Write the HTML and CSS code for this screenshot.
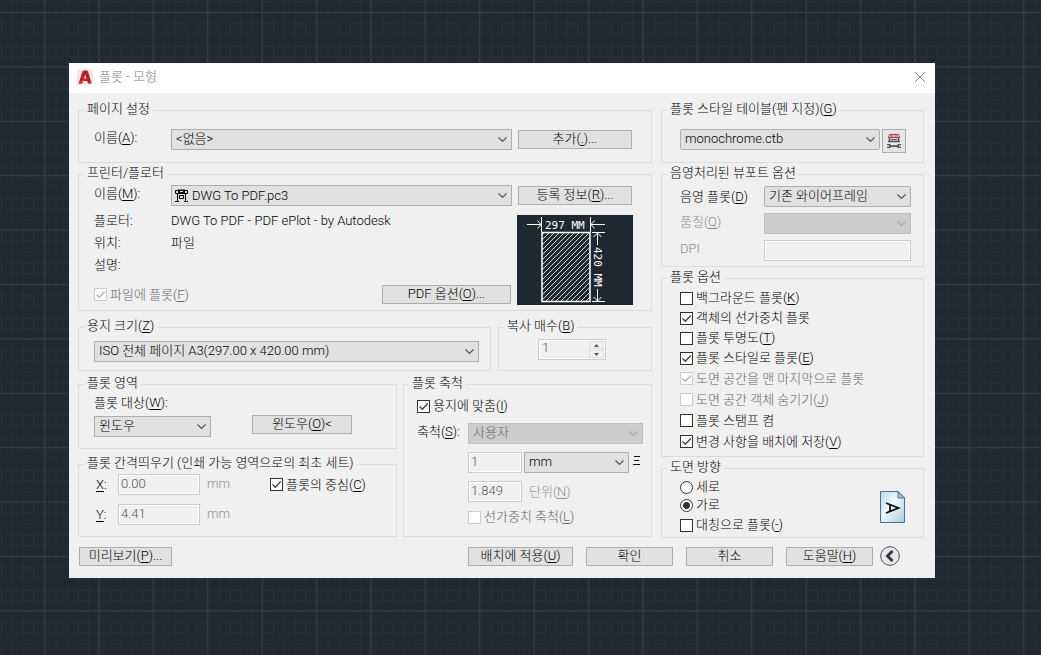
FILE: index.html
```html
<!DOCTYPE html>
<html lang="ko">
<head>
<meta charset="utf-8">
<title>플롯 - 모형</title>
<link rel="stylesheet" href="styles.css">
</head>
<body>
<svg class="canvas-grid" width="100%" height="100%" aria-hidden="true">
  <defs>
    <pattern id="minor" x="44.5" y="12.5" width="10.88" height="10.88" patternUnits="userSpaceOnUse">
      <path d="M.5 0V10.88M0 .5H10.88" stroke="#252e39" stroke-width="1" fill="none"/>
    </pattern>
    <pattern id="major" x="44" y="12" width="54.4" height="54.4" patternUnits="userSpaceOnUse">
      <path d="M.5 0V54.4M0 .5H54.4" stroke="#333d48" stroke-width="1" fill="none"/>
    </pattern>
  </defs>
  <rect width="100%" height="100%" fill="#212832"/>
  <rect width="100%" height="100%" fill="url(#minor)"/>
  <rect width="100%" height="100%" fill="url(#major)"/>
</svg>

<form class="dialog" role="dialog" aria-labelledby="dialog-title">
  <header class="titlebar">
    <svg class="app-icon" width="16" height="16" viewBox="0 0 16 16" aria-hidden="true">
      <rect width="16" height="16" fill="#fbe4e2"/>
      <path d="M1.500 14.500 5.500 2.500Q6 1.500 7 1.500H9.500Q10.500 1.500 11 2.500L14.500 14.500H11L10.200 12H6L5 14.500z" fill="#b3222b"/>
      <path d="M6.800 9.600 8.300 5.500 9.500 9.600z" fill="#f6d0ce"/>
      <path d="M1.500 14.500 4.500 11.500 9.800 9.200 6 12.200 5 14.500z" fill="#cf3a40"/>
    </svg>
    <h1 class="title" id="dialog-title">플롯 - 모형</h1>
    <button class="close" type="button" aria-label="닫기">
      <svg width="12" height="12" viewBox="0 0 12 12"><path d="M1 1 11 11M11 1 1 11" stroke="#8a8a8a" fill="none"/></svg>
    </button>
  </header>

  <div class="columns">
    <div class="column column-main">
      <fieldset class="group">
        <legend>페이지 설정</legend>
        <div class="page-setup row">
          <label class="name-label" for="page-name">이름(<u>A</u>):</label>
          <select class="grow" id="page-name"><option>&lt;없음&gt;</option></select>
          <button class="btn side-btn" type="button">추가(<u>.</u>)...</button>
        </div>
      </fieldset>

      <fieldset class="group">
        <legend>프린터/플로터</legend>
        <div class="printer">
          <div class="row">
            <label class="name-label" for="printer-name">이름(<u>M</u>):</label>
            <div class="icon-select grow">
              <select class="grow" id="printer-name"><option>DWG To PDF.pc3</option></select>
              <svg class="plotter-icon" width="13" height="13" viewBox="0 0 13 13" aria-hidden="true">
                <path d="M.5 1.500H12.500V4.500H.5zM2.500 4.500V12M10.500 4.500V12M0 12.500H4M9 12.500H13M4.500 6.500H8.500V9.500H4.500z" stroke="#000" fill="none"/>
                <path d="M3 .5H10V4H3z" fill="#111"/><path d="M5 2H8V3H5z" fill="#fff"/>
              </svg>
            </div>
            <button class="btn side-btn" type="button">등록 정보(<u>R</u>)...</button>
          </div>
          <div class="printer-body">
            <div class="grow">
              <dl class="facts">
                <dt>플로터:</dt><dd>DWG To PDF - PDF ePlot - by Autodesk</dd>
                <dt>위치:</dt><dd>파일</dd>
                <dt>설명:</dt><dd></dd>
              </dl>
              <div class="file-row">
                <label class="check disabled"><input type="checkbox" checked disabled><span>파일에 플롯(<u>F</u>)</span></label>
                <button class="btn pdf-btn" type="button">PDF 옵션(<u>O</u>)...</button>
              </div>
            </div>
            <svg class="preview" width="116" height="90" viewBox="0 0 116 90" role="img" aria-label="297 x 420 MM">
              <defs>
                <pattern id="hatch" width="5" height="5" patternUnits="userSpaceOnUse">
                  <path d="M-1 6 6 -1M-1 1 1 -1M4 6 6 4" stroke="#fff" stroke-width=".8" fill="none"/>
                </pattern>
              </defs>
              <rect width="116" height="90" fill="#1f2730"/>
              <rect x="25" y="17.500" width="48" height="69" fill="url(#hatch)" stroke="#fff" stroke-width="1.500"/>
              <path d="M24.500 2V17M73.500 2V17M10 9.500H24M20.500 5.500 24 9.500 20.500 13.500M88 9.500H74M77.500 5.500 74 9.500 77.500 13.500M75 17.500H88M75 86.500H88M80.500 18V30M76.500 22 80.500 18 84.500 22M80.500 74V86M76.500 82 80.500 86 84.500 82" stroke="#fff" fill="none"/>
              <text class="dim" x="28" y="14">297 MM</text>
              <text class="dim" transform="translate(77 32) rotate(90)">420 MM</text>
            </svg>
          </div>
        </div>
      </fieldset>

      <div class="paper-copies">
        <fieldset class="group">
          <legend>용지 크기(<u>Z</u>)</legend>
          <div class="paper row">
            <select class="grow" aria-label="용지 크기"><option>ISO 전체 페이지 A3(297.00 x 420.00 mm)</option></select>
          </div>
        </fieldset>
        <fieldset class="group">
          <legend>복사 매수(<u>B</u>)</legend>
          <div class="copies row">
            <div class="spinner">
              <input type="text" value="1" aria-label="복사 매수" disabled>
              <div class="spin-buttons">
                <button type="button" aria-label="증가" disabled><svg width="5" height="3" viewBox="0 0 5 3"><path d="M0 3 2.500 0 5 3z" fill="#555"/></svg></button>
                <button type="button" aria-label="감소" disabled><svg width="5" height="3" viewBox="0 0 5 3"><path d="M0 0 2.500 3 5 0z" fill="#555"/></svg></button>
              </div>
            </div>
          </div>
        </fieldset>
      </div>

      <div class="area-scale">
        <div class="area-column">
          <fieldset class="group">
            <legend>플롯 영역</legend>
            <div class="area">
              <label for="plot-what">플롯 대상(<u>W</u>):</label>
              <div class="area-row">
                <select id="plot-what"><option>윈도우</option></select>
                <button class="btn window-btn" type="button">윈도우(<u>O</u>)&lt;</button>
              </div>
            </div>
          </fieldset>
          <fieldset class="group">
            <legend>플롯 간격띄우기 (인쇄 가능 영역으로의 최초 세트)</legend>
            <div class="offset">
              <label for="off-x"><u>X</u>:</label>
              <input class="field" id="off-x" type="text" value="0.00" disabled>
              <span class="muted unit">mm</span>
              <label class="check"><input type="checkbox" checked><span>플롯의 중심(<u>C</u>)</span></label>
              <label for="off-y"><u>Y</u>:</label>
              <input class="field" id="off-y" type="text" value="4.41" disabled>
              <span class="muted unit">mm</span>
            </div>
          </fieldset>
        </div>
        <fieldset class="group">
          <legend>플롯 축척</legend>
          <div class="scale">
            <label class="check"><input type="checkbox" checked><span>용지에 맞춤(<u>I</u>)</span></label>
            <div class="scale-row">
              <label class="scale-label" for="scale-sel">축척(<u>S</u>):</label>
              <select class="grow" id="scale-sel" disabled><option>사용자</option></select>
            </div>
            <div class="scale-row indent pair">
              <input class="field short" type="text" value="1" aria-label="용지 단위" disabled>
              <select class="unit-select" aria-label="단위"><option>mm</option></select>
              <svg class="equals" width="7" height="10" viewBox="0 0 7 10" aria-hidden="true"><path d="M1 .5H7M1 4.500H6M0 8.500H7" stroke="#111" fill="none"/></svg>
            </div>
            <div class="scale-row indent">
              <input class="field short" id="units" type="text" value="1.849" disabled>
              <label class="muted units-label" for="units">단위(<u>N</u>)</label>
            </div>
            <label class="check disabled indent"><input type="checkbox" disabled><span>선가중치 축척(<u>L</u>)</span></label>
          </div>
        </fieldset>
      </div>
    </div>

    <div class="column column-side">
      <fieldset class="group">
        <legend>플롯 스타일 테이블(펜 지정)(<u>G</u>)</legend>
        <div class="style-table">
          <select class="grow rounded" aria-label="플롯 스타일 테이블"><option>monochrome.ctb</option></select>
          <button class="edit-btn" type="button" aria-label="편집">
            <svg width="14" height="16" viewBox="0 0 14 16">
              <path d="M2.500 1.500H11.500L12.500 4.500H1.500z" fill="#e8c9cb" stroke="#a33a44"/>
              <path d="M5 2V5M9 2V5" stroke="#a33a44"/>
              <path d="M2.500 5V8M11.500 5V8M1 8.500H13" stroke="#4a4f5e" stroke-width="1.500" fill="none"/>
              <path d="M4 6.500H10" stroke="#4a4f5e"/>
              <path d="M0 11H3L4 12.200H10L11 11H14V12.200H12V13.800H14V15H11L10 14H4L3 15H0V13.800H2V12.200H0z" fill="#4d5564"/>
            </svg>
          </button>
        </div>
      </fieldset>

      <fieldset class="group">
        <legend>음영처리된 뷰포트 옵션</legend>
        <div class="viewport">
          <label for="shade">음영 플롯(<u>D</u>)</label>
          <select class="rounded" id="shade"><option>기존 와이어프레임</option></select>
          <label class="muted" for="quality">품질(<u>Q</u>)</label>
          <select id="quality" disabled><option></option></select>
          <label class="muted" for="dpi">DPI</label>
          <input class="field" id="dpi" type="text" disabled>
        </div>
      </fieldset>

      <fieldset class="group">
        <legend>플롯 옵션</legend>
        <div class="options">
          <label class="check"><input type="checkbox"><span>백그라운드 플롯(<u>K</u>)</span></label>
          <label class="check"><input type="checkbox" checked><span>객체의 선가중치 플롯</span></label>
          <label class="check"><input type="checkbox"><span>플롯 투명도(<u>T</u>)</span></label>
          <label class="check"><input type="checkbox" checked><span>플롯 스타일로 플롯(<u>E</u>)</span></label>
          <label class="check disabled"><input type="checkbox" checked disabled><span>도면 공간을 맨 마지막으로 플롯</span></label>
          <label class="check disabled"><input type="checkbox" disabled><span>도면 공간 객체 숨기기(<u>J</u>)</span></label>
          <label class="check"><input type="checkbox"><span>플롯 스탬프 켬</span></label>
          <label class="check"><input type="checkbox" checked><span>변경 사항을 배치에 저장(<u>V</u>)</span></label>
        </div>
      </fieldset>

      <fieldset class="group">
        <legend>도면 방향</legend>
        <div class="orientation">
          <div class="orient-list">
            <label class="check"><input type="radio" name="orient"><span>세로</span></label>
            <label class="check"><input type="radio" name="orient" checked><span>가로</span></label>
            <label class="check"><input type="checkbox"><span>대칭으로 플롯(<u>-</u>)</span></label>
          </div>
          <svg width="25" height="32" viewBox="0 0 25 32" aria-hidden="true">
            <defs><linearGradient id="sheet" x1="0" y1="0" x2="1" y2="1"><stop offset="0" stop-color="#b9dbe4"/><stop offset=".45" stop-color="#eef8fa"/><stop offset="1" stop-color="#a9ced9"/></linearGradient></defs>
            <path d="M.5 .5H18L24.500 7V31.500H.5z" fill="url(#sheet)" stroke="#44729a"/>
            <path d="M18 .5V7H24.500z" fill="#b4bfe8" stroke="#44729a"/>
            <path d="M6 12 18.500 17 6 22M10 13.500V20.500" fill="none" stroke="#111" stroke-width="1.800"/>
          </svg>
        </div>
      </fieldset>
    </div>
  </div>

  <footer class="footer">
    <button class="btn preview-btn" type="button">미리보기(<u>P</u>)...</button>
    <div class="footer-actions">
      <button class="btn apply-btn" type="button">배치에 적용(<u>U</u>)</button>
      <button class="btn" type="submit">확인</button>
      <button class="btn" type="button">취소</button>
      <button class="btn" type="button">도움말(<u>H</u>)</button>
    </div>
    <button class="less-btn" type="button" aria-label="간단히">
      <svg width="20" height="20" viewBox="0 0 20 20"><circle cx="10" cy="10" r="9.300" fill="#e6e8eb" stroke="#4b4d55"/><path d="M12.500 5 7.500 10 12.500 15" fill="none" stroke="#35373f" stroke-width="3"/></svg>
    </button>
  </footer>
</form>
</body>
</html>
```
FILE: styles.css
```css
* { box-sizing: border-box; }

body {
  margin: 0;
  min-height: 100vh;
  padding: 63px 106px 77px 69px;
  background: #212832;
  color: #000;
  font: 300 13px/16px Roboto, "Noto Sans CJK KR", sans-serif;
}

.canvas-grid { position: fixed; inset: 0; z-index: -1; }

.dialog { background: #f0f0f0; }

button, input, select { font: inherit; color: inherit; margin: 0; border-radius: 0; }

u { text-underline-offset: 2px; }

/* Title bar */
.titlebar {
  display: flex;
  align-items: center;
  gap: 6px;
  height: 30px;
  padding: 0 9px 2px 8px;
  background: #fff;
}
.title { flex: 1; margin: 0; font-size: 13px; font-weight: 300; color: #808080; }
.close { display: flex; padding: 0; border: 0; background: none; }

/* Columns and groups */
.columns {
  display: grid;
  grid-template-columns: minmax(0, 574fr) minmax(0, 263fr);
  gap: 9px;
  padding: 9px 11px 0 9px;
}
.column { display: flex; flex-direction: column; gap: 3px; }
.group { min-width: 0; margin: 0; padding: 0; border: 1px solid #dcdcdc; }
.group legend { height: 16px; margin-left: 5px; padding: 0 3px; line-height: 14px; }
.grow { flex: 1; min-width: 0; }
.row { display: flex; align-items: center; gap: 6px; }
.muted { color: #8c8c8c; }

/* Controls */
.btn {
  height: 19px;
  padding: 0 4px 2px;
  border: 1px solid #adadad;
  background: #e1e1e1;
  line-height: 15px;
  white-space: nowrap;
}
select {
  appearance: none;
  height: 21px;
  padding: 0 18px 2px 4px;
  border: 1px solid #adadad;
  background: #e1e1e1 url("data:image/svg+xml,%3Csvg xmlns='http://www.w3.org/2000/svg' width='9' height='6'%3E%3Cpath d='M.5 .5 4.500 4.500 8.500 .5' fill='none' stroke='%23555' stroke-width='1.200'/%3E%3C/svg%3E") no-repeat right 4px center;
}
select.rounded { border-radius: 2px; }
select:disabled {
  border-color: #bfbfbf;
  background-color: #ccc;
  background-image: url("data:image/svg+xml,%3Csvg xmlns='http://www.w3.org/2000/svg' width='9' height='6'%3E%3Cpath d='M.5 .5 4.500 4.500 8.500 .5' fill='none' stroke='%23aaa' stroke-width='1.200'/%3E%3C/svg%3E");
  color: #666;
  opacity: 1;
}
.field, .spinner {
  height: 21px;
  border: 1px solid #ccc;
  background: #f0f0f0;
  color: #555;
  box-shadow: inset 0 0 0 1px #fff;
}
.field { width: 100%; padding: 0 2px 3px; }

.check { display: flex; align-items: center; gap: 3px; white-space: nowrap; }
.check input {
  appearance: none;
  flex: none;
  width: 13px;
  height: 13px;
  border: 1px solid #333;
  background: #fff no-repeat center;
}
.check input[type="checkbox"]:checked {
  background-image: url("data:image/svg+xml,%3Csvg xmlns='http://www.w3.org/2000/svg' width='11' height='11'%3E%3Cpath d='M1.500 5.500 4.300 8.200 9.800 2.500' fill='none' stroke='%23444' stroke-width='1.400'/%3E%3C/svg%3E");
}
.check input[type="radio"] { border-radius: 50%; }
.check input[type="radio"]:checked { background-image: radial-gradient(circle, #333 3px, transparent 4px); }
.check.disabled { color: #666; }
.check.disabled input { border-color: #ccc; }
.check.disabled input:checked {
  background-image: url("data:image/svg+xml,%3Csvg xmlns='http://www.w3.org/2000/svg' width='11' height='11'%3E%3Cpath d='M1.500 5.500 4.300 8.200 9.800 2.500' fill='none' stroke='%23b4b4b4' stroke-width='1.400'/%3E%3C/svg%3E");
}

/* Page setup and printer */
.name-label { width: 71px; padding-bottom: 3px; }
.side-btn { width: 114px; }
.page-setup { padding: 11px 19px 12px 15px; }
.printer { padding: 3px 18px 5px 15px; }
.printer > .row { padding-right: 1px; }
.icon-select { position: relative; display: flex; }
.icon-select select { padding-left: 20px; padding-bottom: 0; }
.plotter-icon { position: absolute; left: 4px; top: 4px; }
.printer-body { display: flex; gap: 6px; padding-top: 9px; }
.facts {
  display: grid;
  grid-template-columns: 77px minmax(0, 1fr);
  grid-auto-rows: 22px;
  margin: 0;
  align-items: start;
}
.facts dd { margin: 0; white-space: nowrap; }
.printer-body .grow { display: flex; flex-direction: column; justify-content: space-between; margin-top: -2px; }
.file-row { display: flex; align-items: center; justify-content: space-between; padding-bottom: 1px; }
.pdf-btn { width: 129px; }
.preview { flex: none; }
.dim { fill: #fff; font: 11px "DejaVu Sans Mono", monospace; }

/* Paper size and copies */
.paper-copies {
  display: grid;
  grid-template-columns: minmax(0, 413fr) minmax(0, 154fr);
  gap: 7px;
  margin-top: 5px;
}
.paper { padding: 6px 11px 8px 15px; }
.copies { padding: 4px 0 0 39px; }
.spinner { display: flex; width: 68px; }
.spinner input { flex: 1; min-width: 0; padding: 0 3px 3px; border: 0; background: none; }
.spin-buttons { display: flex; flex-direction: column; width: 17px; padding: 1px; gap: 1px; }
.spin-buttons button {
  display: flex;
  flex: 1;
  align-items: center;
  justify-content: center;
  padding: 0;
  border: 1px solid #ddd;
  background: #f0f0f0;
}

/* Plot area, offset and scale */
.area-scale {
  display: grid;
  grid-template-columns: minmax(0, 319fr) minmax(0, 249fr);
  gap: 6px;
  margin-top: 2px;
}
.area-column { display: flex; flex-direction: column; gap: 7px; }
.area { padding: 3px 15px 11px; }
.area label { display: block; }
.area-row { display: flex; gap: 41px; padding-top: 5px; }
.area-row select { width: 117px; }
.window-btn { width: 100px; margin-top: -1px; }
.offset {
  display: grid;
  grid-template-columns: 15px 82px 56px 1fr;
  gap: 9px 7px;
  align-items: center;
  padding: 2px 15px 11px 17px;
}
.unit { padding-bottom: 2px; }
.scale { display: flex; flex-direction: column; padding: 6px 8px 11px 13px; }
.scale > .check { padding-bottom: 1px; }
.scale-row { display: flex; align-items: center; padding-top: 8px; }
.scale-label { width: 51px; padding-bottom: 3px; }
.indent { margin-left: 51px; }
.short { width: 54px; }
.pair { gap: 2px; }
.unit-select { flex: 1; min-width: 0; }
.equals { margin: 0 3px 3px 2px; }
.units-label { padding-left: 7px; }
.scale > .check.indent { padding: 7px 0 0; }

/* Right column */
.style-table { display: flex; gap: 2px; padding: 11px 17px 9px 18px; }
.edit-btn {
  display: flex;
  align-items: center;
  justify-content: center;
  width: 24px;
  height: 24px;
  padding: 0;
  border: 1px solid #adadad;
  background: #e6e6e6;
}
.viewport {
  display: grid;
  grid-template-columns: 84px minmax(0, 1fr);
  row-gap: 6px;
  align-items: center;
  padding: 4px 12px 5px 18px;
}
.viewport .muted { padding-bottom: 3px; }
.options {
  display: grid;
  grid-template-rows: repeat(4, 20px) repeat(4, 21px);
  padding: 2px 4px 4px 18px;
}
.orientation {
  display: flex;
  align-items: center;
  justify-content: space-between;
  padding: 2px 18px 1px;
}
.orient-list { display: grid; grid-template-rows: 18px 18px 22px; }

/* Footer */
.footer { display: flex; align-items: center; padding: 8px 35px 12px 10px; }
.preview-btn { width: 93px; }
.footer-actions { display: flex; gap: 13px; margin-left: auto; }
.footer-actions .btn { width: 87px; }
.footer-actions .apply-btn { width: 105px; }
.less-btn { display: flex; margin-left: 7px; padding: 0; border: 0; background: none; }
```
